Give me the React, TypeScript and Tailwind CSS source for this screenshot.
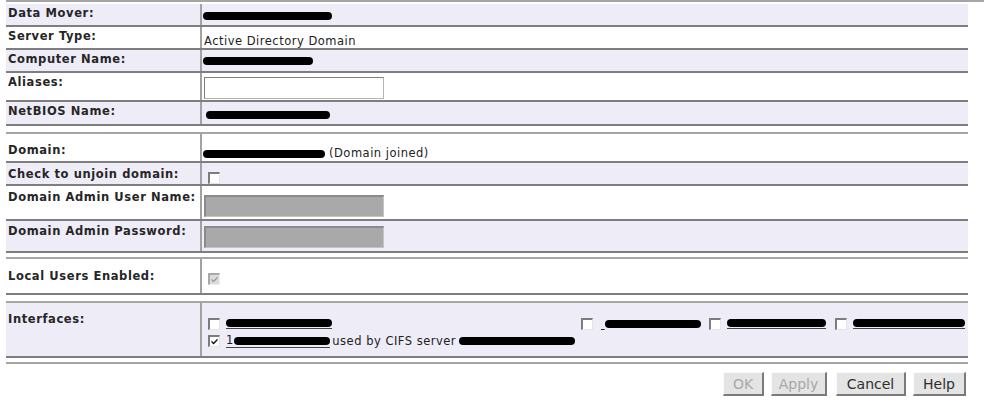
import React from 'react';
import clsx from 'clsx';

const Blob: React.FC<{ className?: string }> = ({ className }) => (
    <span className={clsx('block h-[8px] rounded-full bg-black', className)} />
);

const Box: React.FC<{ checked?: boolean; disabled?: boolean; className?: string }> = ({ checked, disabled, className }) => (
    <span
        className={clsx(
            'relative block w-[12px] h-[12px] shrink-0 border-t-2 border-l-2 border-r border-b',
            disabled
                ? 'bg-[#dcdcdc] border-t-[#a8a8a8] border-l-[#a8a8a8] border-r-[#eeeeee] border-b-[#eeeeee]'
                : 'bg-white border-t-[#7c7c7c] border-l-[#7c7c7c] border-r-[#e4e4e4] border-b-[#e4e4e4]',
            className
        )}
    >
        {checked && (
            <svg viewBox="0 0 9 9" className="absolute left-[0px] top-[0px] w-[9px] h-[9px]">
                <path d="M1.5 3.5 L3.5 5.5 L7.5 1.5 L7.5 3.5 L3.5 7.5 L1.5 5.5 Z" fill={disabled ? '#9a9a9a' : '#111'} />
            </svg>
        )}
    </span>
);

const Row: React.FC<{ label: string; h: string; lav?: boolean; lpt: string; cpt?: string; children?: React.ReactNode }> = ({
    label,
    h,
    lav,
    lpt,
    cpt,
    children,
}) => (
    <div className={clsx('flex border-b-2 border-[#7e7e7e]', lav ? 'bg-[#eeecf7]' : 'bg-white', h)}>
        <div className={clsx('w-[194px] shrink-0 pl-[2px] font-bold tracking-[0.6px] text-[#262626] whitespace-nowrap', lpt)}>
            {label}
        </div>
        <div className="w-[2px] shrink-0 bg-[#a2a2a2]" />
        <div className={clsx('flex-1 pl-[1px]', cpt)}>{children}</div>
    </div>
);

const Sep: React.FC<{ mt: string }> = ({ mt }) => <div className={clsx('h-[2px] bg-[#a6a6a6]', mt)} />;

const Btn: React.FC<{ label: string; w: string; ml: string; disabled?: boolean }> = ({ label, w, ml, disabled }) => (
    <button
        className={clsx(
            'h-[24px] bg-[#e4e4e4] border-t border-l border-t-[#fafafa] border-l-[#fafafa] border-r-2 border-b-2 border-r-[#7a7a7a] border-b-[#7a7a7a] text-[14px] leading-[20px]',
            disabled ? 'text-[#a8a8a8]' : 'text-[#2e2e2e]',
            w,
            ml
        )}
    >
        {label}
    </button>
);

export default function App() {
    return (
        <div className="w-[984px] h-[408px] bg-white font-['DejaVu_Sans',Verdana,sans-serif] text-[11.5px] leading-[13px] text-[#222]">
            <div className="ml-[6px] h-[2px] bg-[#a6a6a6]" />
            <div className="ml-[6px] w-[962px]">
                <div className="h-[2px]" />
                <Row label="Data Mover:" h="h-[23px]" lav lpt="pt-[3px]">
                    <Blob className="mt-[8px] w-[129px]" />
                </Row>
                <Row label="Server Type:" h="h-[23px]" lpt="pt-[3px]" cpt="pt-[8px] pl-[2px] tracking-[0.5px]">
                    Active Directory Domain
                </Row>
                <Row label="Computer Name:" h="h-[23px]" lav lpt="pt-[3px]">
                    <Blob className="mt-[7px] w-[110px]" />
                </Row>
                <Row label="Aliases:" h="h-[29px]" lpt="pt-[3px]">
                    <div className="mt-[4px] ml-[1px] w-[180px] h-[22px] bg-white border border-[#b4b4b4] border-t-[#7e7e7e] border-l-[#7e7e7e]" />
                </Row>
                <Row label="NetBIOS Name:" h="h-[24px]" lav lpt="pt-[3px]">
                    <Blob className="mt-[9px] ml-[3px] w-[124px]" />
                </Row>

                <Sep mt="mt-[6px]" />
                <Row label="Domain:" h="h-[29px]" lpt="pt-[10px]" cpt="pt-[13px]">
                    <div className="flex items-center">
                        <Blob className="w-[122px]" />
                        <span className="ml-[4px] tracking-[0.5px]">(Domain joined)</span>
                    </div>
                </Row>
                <Row label="Check to unjoin domain:" h="h-[23px]" lav lpt="pt-[5px]" cpt="pt-[9px]">
                    <Box className="ml-[5px]" />
                </Row>
                <Row label="Domain Admin User Name:" h="h-[35px]" lpt="pt-[5px]" cpt="pt-[9px]">
                    <div className="ml-[1px] w-[180px] h-[22px] bg-[#a9a9a9] border-t-2 border-l-2 border-r border-b border-t-[#8a8a8a] border-l-[#8a8a8a] border-r-[#c4c4c4] border-b-[#c4c4c4]" />
                </Row>
                <Row label="Domain Admin Password:" h="h-[32px]" lav lpt="pt-[4px]" cpt="pt-[5px]">
                    <div className="ml-[1px] w-[180px] h-[22px] bg-[#a9a9a9] border-t-2 border-l-2 border-r border-b border-t-[#8a8a8a] border-l-[#8a8a8a] border-r-[#c4c4c4] border-b-[#c4c4c4]" />
                </Row>

                <Sep mt="mt-[4px]" />
                <Row label="Local Users Enabled:" h="h-[36px]" lpt="pt-[11px]" cpt="pt-[14px]">
                    <Box checked disabled className="ml-[5px]" />
                </Row>

                <Sep mt="mt-[6px]" />
                <Row label="Interfaces:" h="h-[55px]" lav lpt="pt-[10px]" cpt="pt-[15px]">
                    <div className="flex items-center h-[12px]">
                        <Box className="ml-[5px]" />
                        <span className="ml-[6px] w-[106px] border-b border-[#444] pb-[1px]">
                            <Blob className="w-full" />
                        </span>
                        <Box className="ml-[249px]" />
                        <span className="ml-[8px] underline">&nbsp;</span>
                        <Blob className="w-[96px]" />
                        <Box className="ml-[8px]" />
                        <span className="ml-[6px] w-[99px] border-b border-[#444] pb-[1px]">
                            <Blob className="w-full" />
                        </span>
                        <Box className="ml-[9px]" />
                        <span className="ml-[6px] w-[112px] border-b border-[#444] pb-[1px]">
                            <Blob className="w-full" />
                        </span>
                    </div>
                    <div className="flex items-center h-[12px] mt-[5px]">
                        <Box checked className="ml-[5px]" />
                        <span className="ml-[6px] flex items-center border-b border-[#444]">
                            <span>1</span>
                            <Blob className="ml-[1px] w-[96px]" />
                        </span>
                        <span className="ml-[2px] tracking-[0.5px]">used by CIFS server</span>
                        <Blob className="ml-[3px] w-[116px]" />
                    </div>
                </Row>

                <Sep mt="mt-[4px]" />
                <div className="mt-[8px] flex justify-end pr-[2px]">
                    <Btn label="OK" w="w-[41px]" ml="ml-0" disabled />
                    <Btn label="Apply" w="w-[56px]" ml="ml-[7px]" disabled />
                    <Btn label="Cancel" w="w-[70px]" ml="ml-[9px]" />
                    <Btn label="Help" w="w-[53px]" ml="ml-[7px]" />
                </div>
            </div>
        </div>
    );
}
